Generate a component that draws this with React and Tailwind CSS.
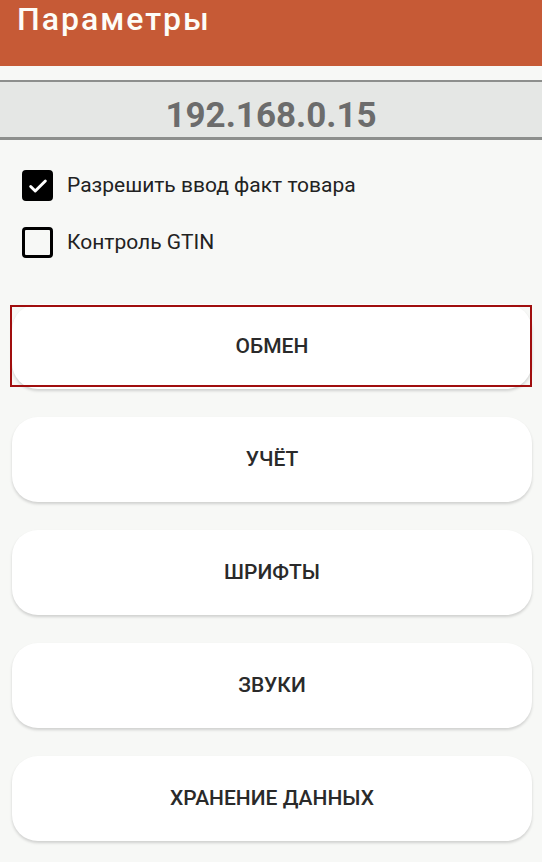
import { useState } from 'react';

const buttons = ['ОБМЕН', 'УЧЁТ', 'ШРИФТЫ', 'ЗВУКИ', 'ХРАНЕНИЕ ДАННЫХ'];

const CheckBox = ({ checked, label, onToggle }) => (
  <button onClick={onToggle} className="flex items-center h-[31px] pl-[22px] text-left">
    <span
      className={`w-[31px] h-[31px] rounded-[4px] border-[3px] border-black flex items-center justify-center ${
        checked ? 'bg-black' : 'bg-transparent'
      }`}
    >
      {checked && (
        <svg width="22" height="22" viewBox="0 0 24 24" fill="none">
          <path d="M4 12.5l5 5L20 6.5" stroke="white" strokeWidth="3.2" strokeLinecap="round" strokeLinejoin="round" />
        </svg>
      )}
    </span>
    <span className="ml-[14px] text-[21px] text-[#222]">{label}</span>
  </button>
);

const App = () => {
  const [allowFact, setAllowFact] = useState(true);
  const [gtin, setGtin] = useState(false);

  return (
    <div className="min-h-[862px] bg-[#f7f8f6] font-['Roboto',sans-serif]">
      {/* Toolbar */}
      <div className="h-[66px] bg-[#c65a36] pl-[17px] pt-[3px]">
        <h1 className="text-[32px] leading-none font-medium tracking-[2px] text-[#fdfdf8]">Параметры</h1>
      </div>

      {/* IP band */}
      <div className="mt-[14px] border-t-[2px] border-b-[3px] border-[#8d8f8d] bg-[#e5e7e5] h-[60px] pt-[16px] text-center">
        <span className="text-[35px] leading-none font-bold text-[#6c6c6c]">192.168.0.15</span>
      </div>

      {/* Options */}
      <div className="flex flex-col gap-[26px] pt-[30px]">
        <CheckBox checked={allowFact} label="Разрешить ввод факт товара" onToggle={() => setAllowFact(!allowFact)} />
        <CheckBox checked={gtin} label="Контроль GTIN" onToggle={() => setGtin(!gtin)} />
      </div>

      {/* Menu buttons */}
      <div className="flex flex-col gap-[28px] pt-[46px] pl-[12px] pr-[10px]">
        {buttons.map((label, i) => (
          <div key={label} className="relative">
            <button className="w-full h-[85px] rounded-[26px] bg-white shadow-[0_2px_3px_rgba(0,0,0,0.16)] text-[21px] font-medium text-[#2a2a2a]">
              {label}
            </button>
            {i === 0 && (
              <div className="absolute left-[-2px] top-[1px] w-[522px] h-[82px] border-2 border-[#a00e0e] pointer-events-none" />
            )}
          </div>
        ))}
      </div>
    </div>
  );
};

export default App;
